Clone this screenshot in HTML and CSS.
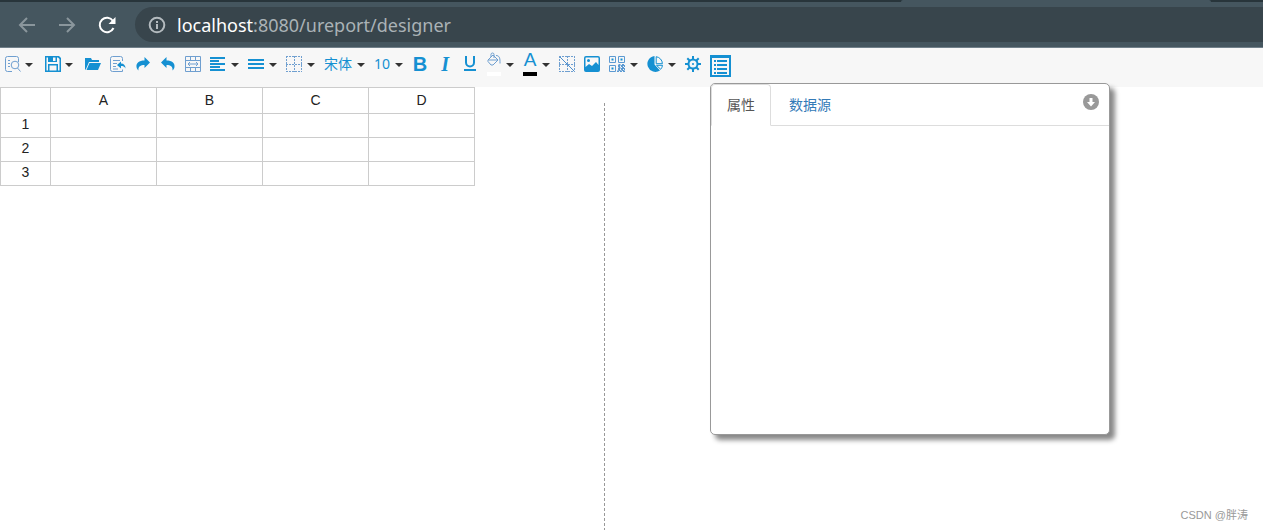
FILE: index.html
```html
<!DOCTYPE html>
<html lang="zh">
<head>
<meta charset="utf-8">
<title>UReport Designer</title>
<link rel="stylesheet" href="styles.css">
</head>
<body>
<header class="browser">
  <div class="tab-strip"><span class="active-tab"></span></div>
  <div class="nav-bar">
    <button class="nav-btn dim" aria-label="Back"><svg width="18" height="18" viewBox="0 0 18 18"><path d="M17 9H2M9 2L2 9l7 7"/></svg></button>
    <button class="nav-btn dim" aria-label="Forward"><svg width="18" height="18" viewBox="0 0 18 18"><path d="M1 9h15M9 2l7 7-7 7"/></svg></button>
    <button class="nav-btn" aria-label="Reload"><svg width="18" height="18" viewBox="0 0 18 18"><path d="M15.5 12A7.200 7.200 0 1 1 15 5"/><path class="solid" d="M17.500 1v7h-7z"/></svg></button>
    <div class="address">
      <svg class="info" width="18" height="18" viewBox="0 0 18 18"><circle cx="9" cy="9" r="7.300"/><path d="M9 8v5M9 5v2"/></svg>
      <span class="url"><span class="host">localhost</span>:8080/ureport/designer</span>
    </div>
  </div>
</header>
<nav class="toolbar">
  <button class="tool wide" aria-label="Preview"><svg class="thin" width="16" height="16" viewBox="0 0 16 16"><path d="M7 15.500H2.500a2 2 0 0 1-2-2v-11a2 2 0 0 1 2-2h9a2 2 0 0 1 2 2V6M3 4.500h2M3 7.500h2M3 10.500h2"/><circle cx="10" cy="9" r="3.800"/><path d="M12.500 12l3 3.500"/></svg><i class="caret"></i></button>
  <button class="tool wide" aria-label="Save"><svg width="16" height="16" viewBox="0 0 16 16"><path class="fill" fill-rule="evenodd" d="M0 0h14l2 2v14H0zM1.500 1.500v13H3V8h10v6.500h1.500V3L13 1.500h-1V6H3V1.500zM8 1.500V5h2.500V1.500zM4.500 9.500v5h7v-5z"/></svg><i class="caret"></i></button>
  <button class="tool" aria-label="Open"><svg width="16" height="16" viewBox="0 0 16 16"><path class="fill" d="M0 14V2h6l1 2h7v2H4L1 13zM4.500 7H16l-3 7H1.500z"/></svg></button>
  <button class="tool" aria-label="Import"><svg class="thin" width="16" height="16" viewBox="0 0 16 16"><path d="M12.500 5V2.500a2 2 0 0 0-2-2h-8a2 2 0 0 0-2 2v11a2 2 0 0 0 2 2h10v-2M3 4.500h7M3 7.500h4M3 10.500h3M3 13h5"/><path class="fill" d="M7 9l4-3.500v2c3 0 4.500 2 4.500 5-1-2-2.500-2.500-4.500-2.500v2.500z"/></svg></button>
  <button class="tool" aria-label="Redo"><svg width="16" height="16" viewBox="0 0 16 16"><path class="fill" d="M15 6.500L9.500 1v3.500C4 4.500 1 7 1.500 11c.200 1.500 1 2.500 2 3.500-.500-4 2-5.500 6-5.500v3z"/></svg></button>
  <button class="tool" aria-label="Undo"><svg width="16" height="16" viewBox="0 0 16 16"><path class="fill" d="M1 6.500L6.500 1v3.500C12 4.500 15 7 14.500 11c-.200 1.500-1 2.500-2 3.500.500-4-2-5.500-6-5.500v3z"/></svg></button>
  <button class="tool" aria-label="Merge cells"><svg class="thin" width="16" height="16" viewBox="0 0 16 16"><path d="M.5.5h15v15H.5zM.5 4.500h15M.5 11.500h15M5.500.5v4M10.500.5v4M5.500 11.500v4M10.500 11.500v4M3 8h10M5 6L3 8l2 2M11 6l2 2-2 2"/></svg></button>
  <button class="tool" aria-label="Align"><svg width="16" height="16" viewBox="0 0 16 16"><path class="fill" d="M0 1h15v2H0zM0 4h9v2H0zM0 7h15v2H0zM0 10h10v2H0zM0 13h15v2H0z"/></svg><i class="caret"></i></button>
  <button class="tool" aria-label="Vertical align"><svg width="16" height="16" viewBox="0 0 16 16"><path class="fill" d="M0 3h16v2H0zM0 7h16v2H0zM0 11h16v2H0z"/></svg><i class="caret"></i></button>
  <button class="tool" aria-label="Borders"><svg class="dots" width="16" height="16" viewBox="0 0 16 16"><path d="M0 .5h16M0 8.500h16M0 15.500h16M.5 0v16M8.500 0v16M15.500 0v16"/></svg><i class="caret"></i></button>
  <button class="tool label">宋体<i class="caret"></i></button>
  <button class="tool label">10<i class="caret"></i></button>
  <button class="tool glyph bold">B</button>
  <button class="tool glyph italic">I</button>
  <button class="tool" aria-label="Underline"><svg width="16" height="16" viewBox="0 0 16 16"><path class="line" d="M4 0v6.500a4 4 0 0 0 8 0V0M2 14h12"/></svg></button>
  <button class="tool" aria-label="Fill color"><span class="swatch white"><svg class="thin" width="14" height="16" viewBox="0 0 14 16"><path d="M1 8l5-5 5 5-5 5H4L1 9.500zM1.500 8h9M4 5V2.500a1.500 1.500 0 0 1 3 0V6M9 3.500c3 0 4 2 4 6v2"/></svg></span><i class="caret"></i></button>
  <button class="tool" aria-label="Text color"><span class="swatch black"><b class="letter">A</b></span><i class="caret"></i></button>
  <button class="tool" aria-label="Slash header"><svg class="dots" width="16" height="16" viewBox="0 0 16 16"><path d="M0 .5h16M0 8.500h16M0 15.500h16M.5 0v16M8.500 0v16M15.500 0v16"/><path class="diagonal" d="M1 1l14 14"/></svg></button>
  <button class="tool" aria-label="Image"><svg width="16" height="16" viewBox="0 0 16 16"><path class="fill" fill-rule="evenodd" d="M2 0h12q2 0 2 2v12q0 2-2 2H2q-2 0-2-2V2Q0 0 2 0zM2 1.500q-.5 0-.5.5v9l3.500-3 3 2 4-4 2.500 3V2q0-.5-.5-.5zM4.500 3a1.500 1.500 0 1 1 0 3 1.500 1.500 0 0 1 0-3z"/></svg></button>
  <button class="tool" aria-label="Codes"><svg class="code" width="16" height="16" viewBox="0 0 16 16"><path d="M.5.5h6v6h-6zM9.500.5h6v6h-6zM.5 9.500h6v6h-6z"/><path class="fill" d="M2.500 2.500h2v2h-2zM11.500 2.500h2v2h-2zM2.500 11.500h2v2h-2z"/><path class="bits" d="M9 10h7M9 13h7M8 15.500h8M10.500 8v7M14 8v7"/></svg><i class="caret"></i></button>
  <button class="tool" aria-label="Chart"><svg width="16" height="16" viewBox="0 0 16 16"><path class="fill" d="M7.500 0v8.500l5.500 6A8 8 0 1 1 7.500 0z"/><path class="outline" d="M9.200.7a7.200 7.200 0 0 1 6.200 7H9.200zM9.500 9.300h6c-.2 1.600-.8 2.800-1.800 4z"/></svg><i class="caret"></i></button>
  <button class="tool" aria-label="Settings"><svg class="gear" width="16" height="16" viewBox="0 0 16 16"><circle cx="8" cy="8" r="4.500"/><path d="M8 0v3M8 13v3M0 8h3M13 8h3M2.300 2.300l2.200 2.200M11.500 11.500l2.200 2.200M2.300 13.700l2.200-2.200M11.500 4.500l2.200-2.200"/><circle class="fill" cx="8" cy="8" r="1"/></svg></button>
  <button class="tool properties" aria-label="Properties"><svg width="21" height="22" viewBox="0 0 21 22"><path class="fill" fill-rule="evenodd" d="M0 0h21v22H0zM2 3v17h17V3z"/><path class="fill" d="M4 5h2v2H4zM4 9h2v2H4zM4 13h2v2H4zM4 17h2v2H4zM7 5h10v2H7zM7 9h10v2H7zM7 13h10v2H7zM7 17h10v2H7z"/></svg></button>
  <aside class="panel">
    <div class="tabs">
      <a class="tab current" href="#properties">属性</a>
      <a class="tab" href="#datasource">数据源</a>
      <button class="collapse" aria-label="Collapse"><svg width="16" height="16" viewBox="0 0 16 16"><circle cx="8" cy="8" r="8"/><path d="M6.500 4h3v4h2.500l-4 4.500L4 8h2.500z"/></svg></button>
    </div>
  </aside>
</nav>
<main class="workspace">
  <div class="canvas">
    <table class="sheet">
      <thead><tr><th class="corner"></th><th>A</th><th>B</th><th>C</th><th>D</th></tr></thead>
      <tbody>
        <tr><th>1</th><td></td><td></td><td></td><td></td></tr>
        <tr><th>2</th><td></td><td></td><td></td><td></td></tr>
        <tr><th>3</th><td></td><td></td><td></td><td></td></tr>
      </tbody>
    </table>
  </div>
  <div class="page-edge"></div>
</main>
<div class="credit">CSDN @胖涛</div>
</body>
</html>
```

FILE: styles.css
```css
* { box-sizing: border-box; }
body {
  margin: 0;
  min-height: 100vh;
  display: flex;
  flex-direction: column;
  background: #fff;
  color: #222;
  font: 14px/20px "Liberation Sans", "Noto Sans CJK SC", sans-serif;
}
button {
  margin: 0;
  padding: 0;
  border: 0;
  background: none;
  font: inherit;
  color: inherit;
}
svg { display: block; flex: none; fill: none; }

.browser { background: #45565f; border-bottom: 1px solid #71808a; }
.tab-strip { display: flex; justify-content: flex-end; height: 2px; background: #28353b; padding-right: 52px; }
.active-tab { width: 310px; background: #45565f; border-radius: 2px 2px 0 0; }
.nav-bar { display: flex; align-items: center; padding: 5px 0 5px 18px; }
.nav-btn { margin-right: 22px; stroke: #fff; stroke-width: 2; }
.nav-btn + .nav-btn + .nav-btn { margin-right: 19px; }
.dim { stroke: #8a969c; }
.solid { fill: #fff; stroke: none; }
.address {
  flex: 1;
  display: flex;
  align-items: center;
  gap: 11px;
  height: 35px;
  padding-left: 13px;
  border-radius: 18px 0 0 18px;
  background: #38454c;
}
.info { stroke: #b4bbbf; stroke-width: 2; }
.url { font: 18px/26px "Noto Sans", sans-serif; color: #aab2b6; }
.host { color: #fff; }

.toolbar {
  position: relative;
  display: flex;
  align-items: center;
  gap: 9px;
  height: 39px;
  padding: 3px 5px 10px;
  background: #f7f7f7;
  color: #1590d2;
}
.tool { display: flex; align-items: center; gap: 5px; }
.wide { gap: 4px; margin-right: 3px; }
.caret { border: 4px solid transparent; border-top-color: #333; border-bottom: 0; margin-top: 2px; }
.fill { fill: #1590d2; stroke: none; }
.thin { stroke: #6f9fd0; }
.dots { stroke: #6f9fd0; stroke-dasharray: 2 1; }
.diagonal { stroke: #4d8fce; stroke-dasharray: none; }
.line { stroke: #1590d2; stroke-width: 2; }
.outline { stroke: #1590d2; }
.code { stroke: #5c9ad2; }
.bits { stroke-width: 2; stroke-dasharray: 2 1; }
.gear { stroke: #1590d2; stroke-width: 2; }
.label { font: 14px/20px "Noto Sans", "Noto Sans CJK SC", sans-serif; }
.glyph { width: 16px; justify-content: center; line-height: 20px; }
.bold { font-weight: 700; font-size: 20px; }
.italic { font: italic 700 20px/20px "Liberation Serif", serif; }
.swatch {
  width: 14px;
  height: 24px;
  display: flex;
  flex-direction: column;
  align-items: center;
  border-bottom: 4px solid;
}
.white { border-color: #fff; }
.black { border-color: #000; }
.letter { font: 19px/16px "Liberation Sans", sans-serif; }
.properties { align-self: flex-end; }

.panel {
  position: absolute;
  top: 35px;
  left: 710px;
  width: 400px;
  height: 352px;
  border: 1px solid #999;
  border-radius: 5px;
  background: #fff;
  box-shadow: 5px 5px 5px #888;
  font-family: "Noto Sans CJK SC", sans-serif;
}
.tabs { display: flex; border-bottom: 1px solid #ddd; }
.tab {
  margin: 0 2px -1px 0;
  padding: 9px 15px 11px;
  border: 1px solid transparent;
  border-radius: 4px 4px 0 0;
  color: #337ab7;
  text-decoration: none;
}
.current { border-color: #ddd #ddd #fff; background: #fff; color: #555; }
.collapse { margin: 10px 10px auto auto; }
.collapse circle { fill: #999; }
.collapse path { fill: #fff; }

.workspace { flex: 1; display: flex; }
.canvas { flex: 0 0 604px; }
.page-edge {
  width: 1px;
  margin-top: 16px;
  background: repeating-linear-gradient(#999 0 3px, transparent 3px 5px);
}
.sheet { border-collapse: collapse; table-layout: fixed; width: 475px; }
.sheet th, .sheet td {
  height: 24px;
  padding: 0;
  border: 1px solid #ccc;
  font-weight: 400;
  line-height: 20px;
  text-align: center;
}
.sheet thead th { height: 26px; padding-bottom: 2px; }
.sheet tbody th { line-height: 18px; padding-bottom: 4px; }
.sheet .corner { width: 50px; }

.credit {
  position: absolute;
  right: 15px;
  bottom: 5px;
  color: #999;
  font-size: 11px;
}
```
